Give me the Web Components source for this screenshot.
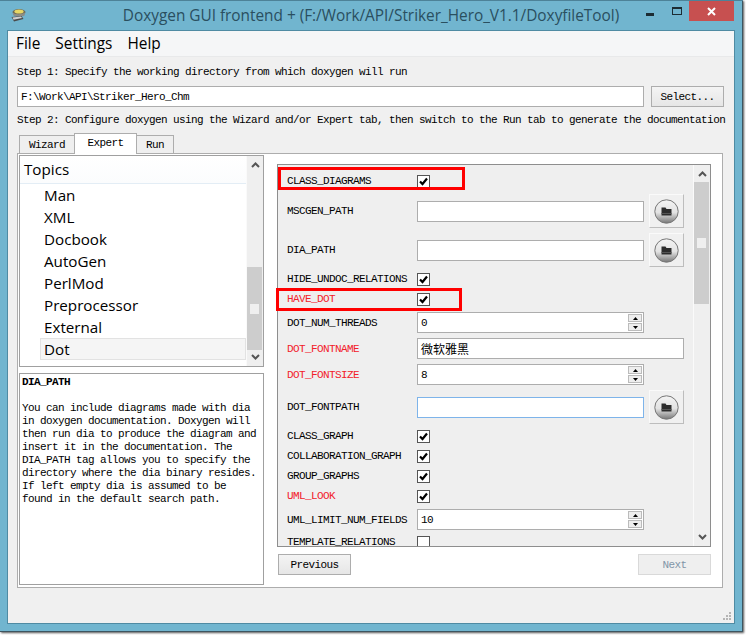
<!DOCTYPE html>
<html><head><meta charset="utf-8">
<style>
html,body{margin:0;padding:0;background:#fff}
body{--mono:"Liberation Mono",monospace;--ui:"Open Sans","Noto Sans",sans-serif;font-family:var(--mono);font-size:11px;color:#000;width:746px;height:635px;overflow:hidden}
</style></head><body>
<x-window>
  <x-menubar><span>File</span><span>Settings</span><span>Help</span></x-menubar>
  <x-content>
    <x-mono>Step 1: Specify the working directory from which doxygen will run</x-mono>
    <x-dirline></x-dirline>
    <x-mono>Step 2: Configure doxygen using the Wizard and/or Expert tab, then switch to the Run tab to generate the documentation</x-mono>
    <x-tabs>
      <x-left slot="left"></x-left>
      <x-right slot="right"></x-right>
    </x-tabs>
  </x-content>
</x-window>
<script>
function def(name,css,html,init){
  customElements.define(name,class extends HTMLElement{
    constructor(){super();const r=this.attachShadow({mode:'open'});
      r.innerHTML='<style>'+css+'</style>'+(typeof html==='function'?html(this):html);}
    connectedCallback(){if(init&&!this._i){this._i=1;init(this,this.shadowRoot);}}
  });
}
const monoText='font:11px/14px var(--mono);letter-spacing:-.6px;white-space:pre;';
const btnFace='background:linear-gradient(#f4f4f4,#e6e6e6);border:1px solid #adadad;box-sizing:border-box;';

def('x-window',`
:host{display:flex;flex-direction:column;box-sizing:border-box;width:743px;height:632px;background:#71b5cf;padding:0 9px 9px 8px;
  box-shadow:inset 0 1px 0 #4d8298,inset -1px 0 0 #3d5560,inset 0 -1px 0 #3d5560,1px 1px 2px #555;}
.title{height:31px;flex:none;display:grid;grid-template-columns:1fr auto 1fr;margin:0 -8px 0 -8px;align-items:start}
.icon{margin:8px 0 0 10px;display:block}
.t{font:15.4px/31px var(--ui);color:#2a4f5f;height:31px;letter-spacing:-.02px;white-space:nowrap}
.ctl{justify-self:end;display:flex;align-items:flex-start;margin-right:8px}
.min{width:8px;height:3px;background:#1c2c33;margin:13px 18px 0 0}
.max{width:10px;height:8px;box-sizing:border-box;border:1px solid #1c2c33;border-top-width:2px;margin:7px 7px 0 0}
.close{width:45px;height:20px;margin-top:1px;background:#c75050;display:flex;align-items:center;justify-content:center}
.client{flex:1;background:#f0f0f0;box-shadow:0 0 0 1px #4f8ba3;display:flex;flex-direction:column;position:relative;min-height:0}
.grip{position:absolute;right:2px;bottom:2px}
`,`<div class="title">
  <svg class="icon" width="17" height="15" viewBox="0 0 17 15"><ellipse cx="9" cy="4" rx="6.5" ry="3" fill="#6d6a55"/><ellipse cx="9" cy="3.6" rx="4.6" ry="2" fill="#e8d765"/><path d="M2.500 4.500l1 3c2 1.500 9 1.500 11 0l1-3.500c-2 2.500-11 3-13 .5z" fill="#8d8d86"/><path d="M1.500 9l10-1 2 3-9.500 2.500z" fill="#4a4a4a"/><path d="M2.500 9.500l8.500-.9 1 1.500-8.500 1.700z" fill="#cfcfcf"/></svg>
  <div class="t">Doxygen GUI frontend + (F:/Work/API/Striker_Hero_V1.1/DoxyfileTool)</div>
  <div class="ctl"><div class="min"></div><div class="max"></div><div class="close"><svg width="9" height="9" viewBox="0 0 9 9"><path d="M1 1l7 7M8 1l-7 7" stroke="#fff" stroke-width="2"/></svg></div></div>
</div>
<div class="client"><slot></slot>
<svg class="grip" width="10" height="10" viewBox="0 0 10 10" fill="#b5b5b5"><rect x="7" y="1" width="2" height="2"/><rect x="4" y="4" width="2" height="2"/><rect x="7" y="4" width="2" height="2"/><rect x="1" y="7" width="2" height="2"/><rect x="4" y="7" width="2" height="2"/><rect x="7" y="7" width="2" height="2"/></svg></div>`);

def('x-menubar',`
:host{display:flex;flex:none;height:25px;background:#f5f6f7;border-bottom:1px solid #e8e9ea;padding-left:8px;gap:15px;font:15.4px/25px var(--ui);color:#000}
`,`<slot></slot>`);

def('x-content',`:host{display:flex;flex-direction:column;padding:8px 10px 0 9px;flex:1;min-height:0}`,`<slot></slot>`);

def('x-mono',`:host{display:block;${monoText}height:14px}`,`<slot></slot>`);

def('x-lineedit',`
:host{display:flex;box-sizing:border-box;height:21px;background:#fff;border:1px solid #adadad;align-items:center;padding-left:3px;${monoText}position:relative}
:host([focus]){border-color:#7eb4ea}
.v{flex:1}
.cjk{font:12px/14px "Noto Sans CJK SC",sans-serif;letter-spacing:0;}
.spin{flex:none;width:14px;height:17px;margin-right:1px;display:flex;flex-direction:column;gap:1px}
.spin i{flex:1;display:flex;align-items:center;justify-content:center;background:#eee;border:1px solid #bbb;box-sizing:border-box}
`,h=>`<div class="v ${h.hasAttribute('cjk')?'cjk':''}">${h.getAttribute('value')||''}</div>`+(h.hasAttribute('spin')?`<div class="spin"><i><svg width="5" height="3" viewBox="0 0 5 3"><path d="M2.500 0L5 3H0z"/></svg></i><i><svg width="5" height="3" viewBox="0 0 5 3"><path d="M0 0h5L2.500 3z"/></svg></i></div>`:''));

def('x-button',`
:host{display:flex;box-sizing:border-box;height:21px;align-items:center;justify-content:center;${btnFace}${monoText}}
:host([disabled]){background:#efefef;border-color:#d9d9d9;color:#8296a8}
`,`<slot></slot>`);

def('x-dirline',`
:host{display:flex;gap:7px;margin:7px 0 6px}
x-lineedit{width:627px}
x-button{width:73px}
`,`<x-lineedit value="F:\\Work\\API\\Striker_Hero_Chm"></x-lineedit><x-button>Select...</x-button>`);

def('x-tabs',`
:host{display:flex;flex-direction:column;margin-top:6px;width:706px}
.bar{display:flex;height:20px;padding-left:2px;align-items:flex-end;position:relative;z-index:1}
.tab{box-sizing:border-box;height:18px;background:#efefef;border:1px solid #adadad;border-bottom:0;${monoText}display:flex;align-items:center;justify-content:center;margin-bottom:0;margin-left:-1px}
.tab:first-child{margin-left:0}
.tab.on{height:21px;background:#fff;margin-bottom:-1px;padding-bottom:2px;z-index:1}
.pane{box-sizing:border-box;height:435px;background:#fff;border:1px solid #adadad;display:flex;padding:1px;gap:13px}
`,`<div class="bar"><div class="tab" style="width:56px">Wizard</div><div class="tab on" style="width:63px">Expert</div><div class="tab" style="width:38px">Run</div></div>
<div class="pane"><slot name="left"></slot><slot name="right"></slot></div>`);

def('x-scrollbar',`
:host{display:flex;flex-direction:column;flex:none;width:17px;background:#efefef;box-sizing:border-box;border-left:1px solid #fafafa}
.sp{display:flex;justify-content:center}
.a{flex:none;height:var(--before)}
.thumb{flex:none;height:var(--h);background:#cdcdcd;margin:0 1px 0 0;display:flex;align-items:center;justify-content:center}
.thumb i{display:block;width:9px;height:10px;background:#efefef}
.b{flex:1;align-items:flex-end}
svg{display:block}
.a svg{margin-top:var(--pad)}
.b svg{margin-bottom:var(--pad)}
`,h=>`<style>:host{--before:${h.getAttribute('before')}px;--h:${h.getAttribute('h')}px;--pad:${h.getAttribute('pad')}px}</style>
<div class="sp a"><svg width="9" height="6" viewBox="0 0 9 6"><path d="M1 5l3.500-3.500L8 5" fill="none" stroke="#555" stroke-width="2"/></svg></div>
<div class="thumb"><i></i></div>
<div class="sp b"><svg width="9" height="6" viewBox="0 0 9 6"><path d="M1 1l3.500 3.500L8 1" fill="none" stroke="#555" stroke-width="2"/></svg></div>`);

def('x-tree',`
:host{display:flex;box-sizing:border-box;height:212px;border:1px solid #a0a0a0;background:#fff;font:15.2px/22px var(--ui);color:#000}
.main{flex:1;display:flex;flex-direction:column;min-width:0}
.h{height:27px;line-height:27px;padding-left:4px;border-bottom:1px solid #e3edf5;background:linear-gradient(#fff,#fbfcfd);flex:none}
.list{padding:0 0 0 20px;margin-top:0}
.i{height:22px;padding-left:4px}
.i.s{box-sizing:border-box;height:22px;background:#f5f5f5;border:1px solid #e2e2e2;padding-left:3px;line-height:20px}
`,`<div class="main"><div class="h">Topics</div><div class="list">
<div class="i">Man</div><div class="i">XML</div><div class="i">Docbook</div><div class="i">AutoGen</div><div class="i">PerlMod</div><div class="i">Preprocessor</div><div class="i">External</div><div class="i s">Dot</div></div></div>
<x-scrollbar before="111" h="83" pad="6"></x-scrollbar>`);

def('x-help',`
:host{display:block;box-sizing:border-box;height:212px;border:1px solid #a0a0a0;background:#fff;padding:2px 2px;${monoText}line-height:13px}
b{display:block;font-weight:700;margin:0 0 13px;height:13px}
`,`<b>DIA_PATH</b>You can include diagrams made with dia
in doxygen documentation. Doxygen will
then run dia to produce the diagram and
insert it in the documentation. The
DIA_PATH tag allows you to specify the
directory where the dia binary resides.
If left empty dia is assumed to be
found in the default search path.`);

def('x-left',`:host{display:flex;flex-direction:column;gap:6px;width:245px;flex:none}`,`<x-tree></x-tree><x-help></x-help>`);

def('x-check',`
:host{display:block;width:13px;height:13px;box-sizing:border-box;border:1px solid #555;background:#fff}
svg{display:block}
`,h=>h.hasAttribute('on')?`<svg width="11" height="11" viewBox="0 0 11 11"><path d="M2 5.500l2.500 2.500L9 2.500" fill="none" stroke="#000" stroke-width="2.200"/></svg>`:'');

def('x-folder',`
:host{display:block;box-sizing:border-box;width:35px;height:34px;background:#f0f0f0;border:1px solid #bdbdbd;border-top-color:#fafafa;border-left-color:#fafafa}
svg{display:block;margin:4px 0 0 4px}
`,`<svg width="25" height="25" viewBox="0 0 25 25"><defs><linearGradient id="g" x1="0" y1="0" x2="0" y2="1"><stop offset="0" stop-color="#f4f4f4"/><stop offset=".55" stop-color="#e2e2e2"/><stop offset="1" stop-color="#777"/></linearGradient></defs><circle cx="12.500" cy="12.500" r="11.700" fill="url(#g)" stroke="#777" stroke-width="1"/><path d="M7.500 8.500h4l1 1.500h5v6.500h-10z" fill="#2c2c2c"/><rect x="7.500" y="14" width="10" height="1" fill="#555"/></svg>`);

def('x-row',`
:host{display:grid;grid-template-columns:125px 227px 35px;column-gap:5px;align-items:center;flex:none;margin-top:1px;min-height:21px}
:host([kind=check]){height:16px;min-height:16px;margin-top:0}
.l{${monoText}}
:host([red]) .l{color:#f2202a}
.slot{grid-column:2}
:host([wide]) .slot{grid-column:2 / 4}
`,h=>`<div class="l">${h.getAttribute('label')}</div><div class="slot"><slot></slot></div><slot name="btn"></slot>`);

def('x-form',`
:host{display:flex;flex:none;box-sizing:border-box;height:383px;border:1px solid #8e8e8e;background:#efefef;overflow:hidden}
.m{flex:1;display:flex;flex-direction:column;gap:4px;padding:8px 0 0 9px;min-width:0;overflow:hidden}
`,`<div class="m"><slot></slot></div><x-scrollbar before="17" h="122" pad="6"></x-scrollbar>`);

def('x-right',`
:host{display:flex;flex-direction:column;width:434px;flex:none;margin-top:9px;position:relative}
.btns{display:flex;justify-content:space-between;margin:7px 0 0 1px;}
x-button{width:73px}
.mark{position:absolute;box-sizing:border-box;border:3px solid #f00;pointer-events:none}
`,`<x-form>
<x-row kind="check" label="CLASS_DIAGRAMS"><x-check on></x-check></x-row>
<x-row label="MSCGEN_PATH"><x-lineedit></x-lineedit><x-folder slot="btn"></x-folder></x-row>
<x-row label="DIA_PATH"><x-lineedit></x-lineedit><x-folder slot="btn"></x-folder></x-row>
<x-row kind="check" label="HIDE_UNDOC_RELATIONS"><x-check on></x-check></x-row>
<x-row kind="check" red label="HAVE_DOT"><x-check on></x-check></x-row>
<x-row label="DOT_NUM_THREADS"><x-lineedit value="0" spin></x-lineedit></x-row>
<x-row red wide label="DOT_FONTNAME"><x-lineedit value="微软雅黑" cjk></x-lineedit></x-row>
<x-row red label="DOT_FONTSIZE"><x-lineedit value="8" spin></x-lineedit></x-row>
<x-row label="DOT_FONTPATH"><x-lineedit focus></x-lineedit><x-folder slot="btn"></x-folder></x-row>
<x-row kind="check" label="CLASS_GRAPH"><x-check on></x-check></x-row>
<x-row kind="check" label="COLLABORATION_GRAPH"><x-check on></x-check></x-row>
<x-row kind="check" label="GROUP_GRAPHS"><x-check on></x-check></x-row>
<x-row kind="check" red label="UML_LOOK"><x-check on></x-check></x-row>
<x-row label="UML_LIMIT_NUM_FIELDS"><x-lineedit value="10" spin></x-lineedit></x-row>
<x-row kind="check" label="TEMPLATE_RELATIONS"><x-check></x-check></x-row>
</x-form>
<div class="btns"><x-button>Previous</x-button><x-button disabled>Next</x-button></div>
<div class="mark" style="left:1px;top:3px;width:187px;height:23px"></div>
<div class="mark" style="left:-1px;top:124px;width:186px;height:23px"></div>`);
</script>
</body></html>
